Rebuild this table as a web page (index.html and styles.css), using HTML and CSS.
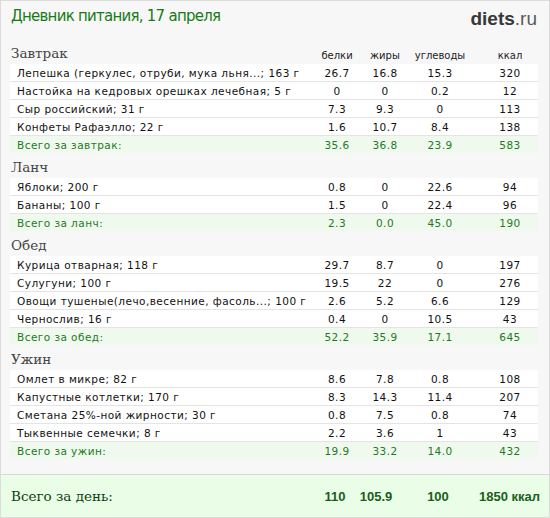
FILE: index.html
```html
<!DOCTYPE html>
<html lang="ru">
<head>
<meta charset="utf-8">
<link rel="stylesheet" href="styles.css">
</head>
<body>
<div class="page">
  <div class="main">
    <div class="top">
      <div class="title">Дневник питания, 17 апреля</div>
      <div class="logo"><b>diets</b>.ru</div>
    </div>

    <div class="sec">
      <div class="head"><span class="meal">Завтрак</span><span>белки</span><span>жиры</span><span>углеводы</span><span class="k">ккал</span></div>
      <div class="row"><span>Лепешка (геркулес, отруби, мука льня...; 163 г</span><span>26.7</span><span>16.8</span><span>15.3</span><span class="k">320</span></div>
      <div class="row"><span>Настойка на кедровых орешках лечебная; 5 г</span><span>0</span><span>0</span><span>0.2</span><span class="k">12</span></div>
      <div class="row"><span>Сыр российский; 31 г</span><span>7.3</span><span>9.3</span><span>0</span><span class="k">113</span></div>
      <div class="row"><span>Конфеты Рафаэлло; 22 г</span><span>1.6</span><span>10.7</span><span>8.4</span><span class="k">138</span></div>
      <div class="row total"><span>Всего за завтрак:</span><span>35.6</span><span>36.8</span><span>23.9</span><span class="k">583</span></div>
    </div>

    <div class="sec">
      <div class="head"><span class="meal">Ланч</span></div>
      <div class="row"><span>Яблоки; 200 г</span><span>0.8</span><span>0</span><span>22.6</span><span class="k">94</span></div>
      <div class="row"><span>Бананы; 100 г</span><span>1.5</span><span>0</span><span>22.4</span><span class="k">96</span></div>
      <div class="row total"><span>Всего за ланч:</span><span>2.3</span><span>0.0</span><span>45.0</span><span class="k">190</span></div>
    </div>

    <div class="sec">
      <div class="head"><span class="meal">Обед</span></div>
      <div class="row"><span>Курица отварная; 118 г</span><span>29.7</span><span>8.7</span><span>0</span><span class="k">197</span></div>
      <div class="row"><span>Сулугуни; 100 г</span><span>19.5</span><span>22</span><span>0</span><span class="k">276</span></div>
      <div class="row"><span>Овощи тушеные(лечо,весенние, фасоль...; 100 г</span><span>2.6</span><span>5.2</span><span>6.6</span><span class="k">129</span></div>
      <div class="row"><span>Чернослив; 16 г</span><span>0.4</span><span>0</span><span>10.5</span><span class="k">43</span></div>
      <div class="row total"><span>Всего за обед:</span><span>52.2</span><span>35.9</span><span>17.1</span><span class="k">645</span></div>
    </div>

    <div class="sec">
      <div class="head"><span class="meal">Ужин</span></div>
      <div class="row"><span>Омлет в микре; 82 г</span><span>8.6</span><span>7.8</span><span>0.8</span><span class="k">108</span></div>
      <div class="row"><span>Капустные котлетки; 170 г</span><span>8.3</span><span>14.3</span><span>11.4</span><span class="k">207</span></div>
      <div class="row"><span>Сметана 25%-ной жирности; 30 г</span><span>0.8</span><span>7.5</span><span>0.8</span><span class="k">74</span></div>
      <div class="row"><span>Тыквенные семечки; 8 г</span><span>2.2</span><span>3.6</span><span>1</span><span class="k">43</span></div>
      <div class="row total"><span>Всего за ужин:</span><span>19.9</span><span>33.2</span><span>14.0</span><span class="k">432</span></div>
    </div>
  </div>

  <div class="day">
    <span class="dlabel">Всего за день:</span>
    <span>110</span><span>105.9</span><span>100</span><span class="dk">1850 ккал</span>
  </div>
</div>
</body>
</html>
```

FILE: styles.css
```css
* { box-sizing: border-box; }
html, body { margin: 0; padding: 0; }
body { width: 550px; height: 518px; background: #fff; }

.page {
  width: 550px;
  height: 518px;
  border: 1px solid #dcdcdc;
  background: #f7f7f7;
  display: flex;
  flex-direction: column;
}

.main {
  flex: 1;
  padding: 0 11px 0 9px;
}

.top {
  display: flex;
  justify-content: space-between;
  align-items: flex-start;
  height: 38px;
  padding-top: 6px;
}

.title {
  font-family: "DejaVu Sans", Verdana, sans-serif;
  font-size: 15px;
  color: #177a17;
  letter-spacing: -0.75px;
  padding-left: 1px;
}

.logo {
  font-family: "Liberation Sans", Arial, sans-serif;
  font-size: 19px;
  color: #5a5a5a;
  padding-right: 1px;
  padding-top: 1px;
}
.logo b { color: #383838; }

.head, .row {
  display: grid;
  grid-template-columns: 303px 48px 48px 62px 66px;
}

.head {
  height: 25px;
  align-items: end;
  padding-bottom: 3px;
  font-family: "DejaVu Sans", Verdana, sans-serif;
  font-size: 10px;
  color: #222;
}
.head span { text-align: center; }
.head .meal {
  text-align: left;
  font-family: "DejaVu Serif", Georgia, serif;
  font-size: 13.5px;
  color: #444;
  padding-left: 1px;
  line-height: 16px;
}

.row {
  height: 18px;
  align-items: center;
  background: #fff;
  border-bottom: 1px solid #e4e4e4;
  font-family: "DejaVu Sans", Verdana, sans-serif;
  font-size: 10.5px;
  color: #111;
  letter-spacing: 0.45px;
}
.row span { text-align: center; white-space: nowrap; }
.row span:first-child { text-align: left; padding-left: 7px; }
.k { padding-left: 12px; }

.row.total {
  height: 17px;
  background: #f0f9ee;
  color: #1e7a1e;
  border-bottom: none;
}

.day {
  height: 43px;
  border-top: 1px solid #d8d8d8;
  background: #e9fde7;
  display: grid;
  grid-template-columns: 305px 40px 42px 82px 58px;
  align-items: center;
  padding: 0 11px 0 9px;
  font-family: "Liberation Sans", Arial, sans-serif;
  font-weight: bold;
  font-size: 13px;
  color: #1b5e1b;
}
.day span { text-align: center; white-space: nowrap; }
.day .dlabel {
  text-align: left;
  font-family: "DejaVu Serif", Georgia, serif;
  font-weight: normal;
  font-size: 13.5px;
  color: #0d420d;
  padding-left: 1px;
}
.day .dk { text-align: right; }
```
